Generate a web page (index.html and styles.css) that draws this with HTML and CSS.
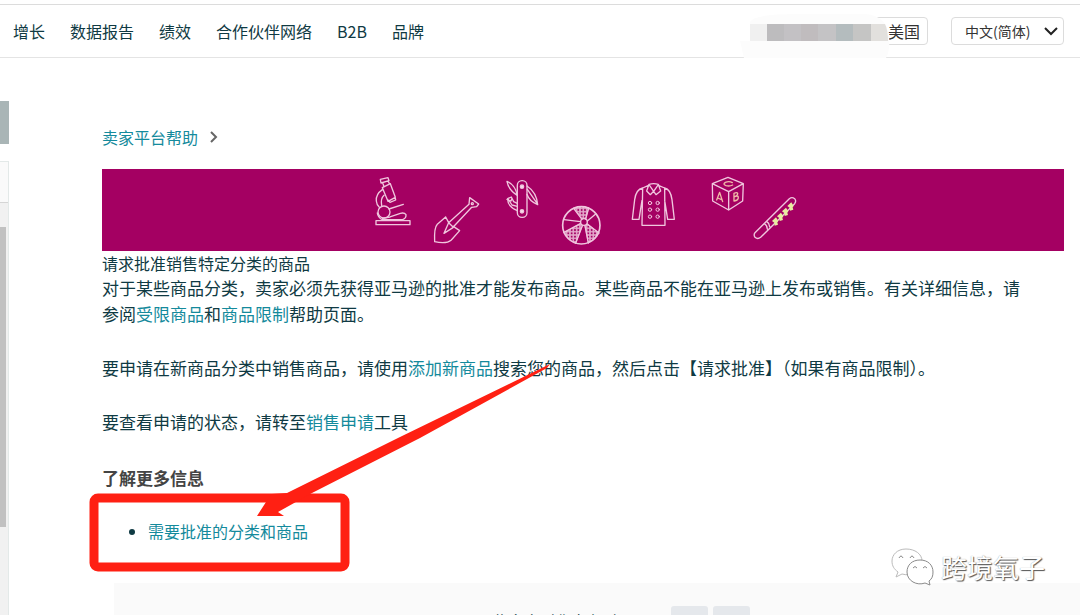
FILE: index.html
```
<!DOCTYPE html>
<html lang="zh-CN">
<head>
<meta charset="utf-8">
<meta name="viewport" content="width=device-width, initial-scale=1">
<title>请求批准销售特定分类的商品</title>
<link rel="stylesheet" href="styles.css">
</head>
<body>
<header class="topbar">
  <nav class="nav">
    <a href="#">增长</a>
    <a href="#">数据报告</a>
    <a href="#">绩效</a>
    <a href="#">合作伙伴网络</a>
    <a href="#">B2B</a>
    <a href="#">品牌</a>
  </nav>
  <div class="tools">
    <button class="market" type="button">美国
      <svg class="mask" width="150" height="46" viewBox="0 0 150 46" aria-hidden="true">
        <path d="M10 9Q13 1 58 1H125Q149 3 149 26Q150 38 146 45H4L0 28H10Z" fill="#fcfcfc"/>
        <path d="M10 11h17v17H10z" fill="#f0f0f0"/>
        <path d="M27 11h18v17H27z" fill="#bdbcbe"/>
        <path d="M44 11h18v17H44z" fill="#c3c1c4"/>
        <path d="M61 11h18v17H61z" fill="#c0bcbe"/>
        <path d="M78 11h19v17H78z" fill="#c4c3c5"/>
        <path d="M96 11h18v17H96z" fill="#b4bcbe"/>
        <path d="M113 11h18v17h-18z" fill="#c5c5c4"/>
        <path d="M131 11h14q3 6 3 17h-17z" fill="#e2e0dd"/>
      </svg>
    </button>
    <div class="language">
      <select aria-label="语言"><option>中文(简体)</option></select>
      <svg width="14" height="10" viewBox="0 0 14 10" aria-hidden="true"><path d="M1 2l6 6 6-6" fill="none" stroke="#222" stroke-width="2"/></svg>
    </div>
  </div>
</header>

<div class="page">
  <aside class="side">
    <div class="side-tab"></div>
    <div class="side-panel">
      <div class="side-head"></div>
      <div class="side-thumb"></div>
    </div>
  </aside>

  <main class="content">
    <nav class="crumbs" aria-label="导航路径">
      <a href="#">卖家平台帮助</a>
      <svg width="8" height="12" viewBox="0 0 8 12" aria-hidden="true"><path d="M1 1l5 5-5 5" fill="none" stroke="#666" stroke-width="2"/></svg>
    </nav>

    <div class="banner">
      <svg width="440" height="82" viewBox="363 169 440 82" aria-hidden="true">
        <defs>
          <pattern id="dots" width="10" height="10" patternUnits="userSpaceOnUse">
            <rect width="10" height="10" fill="#e3a6ca"/>
            <circle cx="5" cy="5" r="3" fill="#a40062"/>
          </pattern>
        </defs>
        <g transform="translate(360 165) scale(.3333)" fill="none" stroke="#f0c6de" stroke-width="4" stroke-linejoin="round" stroke-linecap="round">
          <path d="M61 43l23-5 3 9-24 7zM68 53l4 12M84 48l5 9M67 68l24-12 15 41-22 12zM84 105l6 7 17-7-2-10M67 74q-20 14-18 34 1 12 9 19M72 91q-11 10-7 31"/>
          <circle cx="72" cy="141" r="18"/>
          <path d="M87 132l43-14M52 144q2 15 15 20h61q11-4 10-15-5-7-17-4l-31 11-22 4"/>
          <rect x="48" y="167" width="102" height="12"/>
          <path d="M329 98l27 19-6 8-15 2-56 60M329 98l-2 20-61 55M257 156l-25 22q-10 10-8 52 35 8 50-5l25-28-19-13M257 156l9 17M252 205l14-32 14 14-28 18z"/>
          <circle cx="337" cy="116" r="3"/>
          <rect x="472" y="47" width="29" height="110" rx="14"/>
          <circle cx="486" cy="65" r="5" fill="#f7dfed"/><circle cx="486" cy="139" r="5" fill="#f7dfed"/>
          <path d="M472 91q-27-17-31-42 25 11 31 42M501 63q29 19 32 56-25-10-32-31M502 73l30 43M472 137q-30-13-29-36l11-5 7 14 11 5M445 103l11 17 16 4M441 103l12 5 3-8"/>
          <path d="M668 161L643 130Q664 120 686 129L677 161Z" fill="url(#dots)" stroke-width="2"/>
          <path d="M661 176L614 202Q624 226 647 235L667 183Z" fill="url(#dots)" stroke-width="2"/>
          <path d="M682 177L717 204Q706 227 685 234L675 183Z" fill="url(#dots)" stroke-width="2"/>
          <circle cx="664" cy="181" r="56" stroke-width="5"/>
          <circle cx="672" cy="171" r="10" fill="#a40062"/>
          <path d="M666 163L641 130M677 162L686 129M661 176L612 202M667 182L647 235M675 182L685 234M682 177L717 204M682 168L708 146M661 170L612 164"/>
        </g>
        <g transform="translate(600 165) scale(.3333)" fill="none" stroke="#f0c6de" stroke-width="4" stroke-linejoin="round" stroke-linecap="round">
          <path d="M144 62l-16 7-2 112h69l-1-112-17-7M128 69q-20 4-24 35l-7 59h20l9-57M194 69q18 4 22 35l7 59h-20l-9-57M147 58q14-4 28 0l7 20-14 11-7-10-10 10-11-11zM147 59l14 20 14-20"/>
          <g stroke-width="3"><circle cx="150" cy="114" r="5"/><circle cx="173" cy="114" r="5"/><circle cx="150" cy="134" r="5"/><circle cx="173" cy="134" r="5"/><circle cx="150" cy="155" r="5"/><circle cx="173" cy="155" r="5"/></g>
          <path d="M384 37l46 19-2 52-42 27-48-27-1-52zM337 56l49 24 44-24M386 80v55"/>
          <path stroke="#f0b9a8" d="M350 105l9-23 9 28M353 99l12 5M402 85v23q14-2 13-12-2-6-13 0 12-5 11-11-2-4-11 0M397 53q-9-6-21-1-9 6 2 10 11 3 20-2"/>
          <path d="M465 203L568 101q8-6 16 0 6 7 0 15L482 217q-9 7-17 0-5-7 0-14zM493 176q8 4 9 16M500 169q8 5 9 16"/>
          <g stroke="none" fill="#e8eda0"><path id="tooth" d="M516 168l12-11 7 11-3 4 2 7-10 3-1-9z"/><use href="#tooth" x="15" y="-14"/><use href="#tooth" x="30" y="-29"/><use href="#tooth" x="46" y="-45"/></g>
        </g>
      </svg>
    </div>

    <article class="article">
      <h1>请求批准销售特定分类的商品</h1>
      <p>对于某些商品分类，卖家必须先获得亚马逊的批准才能发布商品。某些商品不能在亚马逊上发布或销售。有关详细信息，请参阅<a href="#">受限商品</a>和<a href="#">商品限制</a>帮助页面。</p>
      <p>要申请在新商品分类中销售商品，请使用<a href="#">添加新商品</a>搜索您的商品，然后点击【请求批准】（如果有商品限制）。</p>
      <p>要查看申请的状态，请转至<a href="#">销售申请</a>工具</p>
      <h2>了解更多信息</h2>
      <ul><li><a href="#">需要批准的分类和商品</a></li></ul>
    </article>

    <footer class="feedback">
      <span>此文章对您有帮助吗？</span>
      <button type="button" aria-label="是"></button>
      <button type="button" aria-label="否"></button>
    </footer>
  </main>
</div>

<svg class="callout" width="480" height="220" viewBox="80 360 480 220" aria-hidden="true">
  <rect x="94" y="498" width="251" height="69" rx="4" fill="none" stroke="#ff2013" stroke-width="9"/>
  <path d="M257 516L266 502 272 494 287 493 400 437 550 364 547 368 420 438 312 493 278 512 284 516Z" fill="#ff2013"/>
</svg>

<div class="watermark">
  <svg width="44" height="38" viewBox="0 0 44 38" aria-hidden="true">
    <g fill="#fff" stroke="#8a8a8a" stroke-width="1" stroke-linejoin="round">
      <path d="M15 1C6 1 1 7 1 13c0 5 2 8 6 11l-2 5 6-3c10 3 20-3 20-13C31 6 24 1 15 1z" stroke="#bbb"/>
      <path d="M29 12c-8 0-13 5-13 12 0 9 10 14 18 11l5 2-1-4c3-2 4-5 4-9 0-7-5-12-13-12z"/>
      <path d="M8 10q2-4 4 0M19 10q2-4 4 0M22 20q2-3 4 0M32 20q2-3 4 0" fill="none"/>
    </g>
  </svg>
  <span>跨境氧子</span>
</div>
</body>
</html>
```
FILE: styles.css
```
* { box-sizing: border-box; }

body {
  display: flex;
  flex-direction: column;
  position: relative;
  height: 100vh;
  margin: 0;
  overflow: hidden;
  background: #fff;
  color: #0f3a43;
  font: 16px/26px "Noto Sans CJK SC", sans-serif;
}

a { color: #148a9c; text-decoration: none; }

.topbar {
  display: flex;
  flex: none;
  align-items: center;
  justify-content: space-between;
  margin-top: 4px;
  padding: 0 16px 0 13px;
  height: 54px;
  border-top: 1px solid #dcdcdc;
  border-bottom: 1px solid #e4e4e4;
}

.nav { display: flex; gap: 25px; }
.nav a { color: #0f3a43; }

.tools { display: flex; gap: 23px; }

.market {
  position: relative;
  width: 110px;
  height: 28px;
  padding: 0 7px;
  border: 1px solid #dcdcdc;
  border-radius: 4px;
  background: #fff;
  color: #333;
  font: inherit;
  line-height: 24px;
  text-align: right;
}

.mask { position: absolute; top: -5px; right: 37px; }

.language {
  display: grid;
  align-items: center;
}

.language select,
.language svg { grid-area: 1 / 1; }

.language select {
  width: 113px;
  height: 28px;
  padding: 0 13px;
  border: 1px solid #dcdcdc;
  border-radius: 4px;
  appearance: none;
  background: #fff;
  color: #333;
  font: 14px/24px "Noto Sans CJK SC", sans-serif;
}

.language svg { justify-self: end; margin-right: 6px; pointer-events: none; }

.page { display: flex; flex: 1; min-height: 0; }

.side {
  display: flex;
  flex: none;
  flex-direction: column;
  gap: 17px;
  width: 9px;
  padding-top: 43px;
}

.side-tab { height: 43px; background: #a9b5b6; }

.side-panel {
  flex: 1;
  border: 1px solid #e3e9e8;
  border-width: 1px 1px 0 0;
  background: #f1f1f1;
}

.side-head {
  height: 41px;
  margin-bottom: 24px;
  border-bottom: 1px solid #d5d5d5;
  background: #fafafa;
}

.side-thumb { width: 6px; height: 300px; background: #c1c1c1; }

.content {
  flex: 1;
  min-width: 0;
  padding: 66px 0 0 93px;
}

.crumbs { display: flex; align-items: center; gap: 12px; }

.banner {
  display: flex;
  justify-content: center;
  margin: 19px 16px 0 0;
  background: #a40062;
}

.article {
  padding-right: 50px;
  font-size: 17px;
}

.article h1 { margin: 0; font-size: 16px; font-weight: 400; line-height: 24px; }
.article p { margin: 0 0 28px; }
.article h2 { margin: 0; padding-top: 2px; color: #444; font-size: 17px; line-height: 26px; }
.article ul { margin: 27px 0 0; padding-left: 46px; font-size: 16px; }

.feedback {
  display: flex;
  justify-content: center;
  gap: 5px;
  height: 80px;
  margin: 39px 0 0 12px;
  padding: 23px 0 0 48px;
  background: #fafafa;
}

.feedback span { margin-right: 14px; padding-top: 2px; }

.feedback button {
  width: 37px;
  height: 34px;
  padding: 0;
  border: 0;
  border-radius: 3px;
  background: #e5e8ec;
}

.callout { position: absolute; top: 360px; left: 80px; pointer-events: none; }

.watermark {
  display: flex;
  position: absolute;
  right: 35px;
  bottom: 29px;
  align-items: center;
  gap: 6px;
  color: #fff;
  font-size: 26px;
  line-height: 38px;
  text-shadow: 1px 1px 1px #555, 0 0 1px #999;
}
```
